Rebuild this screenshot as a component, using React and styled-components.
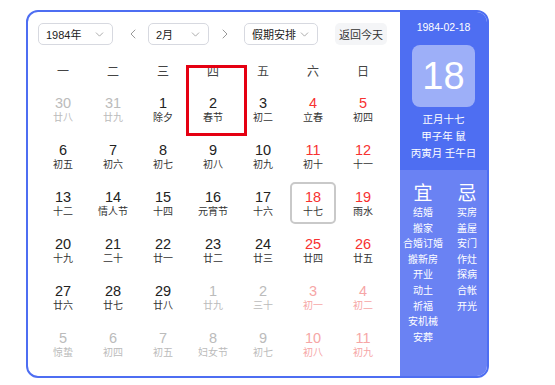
import React from 'react';
import styled, { createGlobalStyle } from 'styled-components';
import { ChevronDown, ChevronLeft, ChevronRight } from 'lucide-react';

const GlobalStyle = createGlobalStyle`
  body {
    margin: 0;
    background: #fff;
    font-family: "Liberation Sans", "Noto Sans CJK SC", sans-serif;
  }
  * { box-sizing: border-box; }
`

const Page = styled.div`
  padding: 10px 0 0 26px;
`

const Card = styled.div`
  position: relative;
  display: flex;
  width: 463px;
  height: 368px;
  border: 2px solid #4e6ef2;
  border-radius: 12px;
  overflow: hidden;
`

const Main = styled.div`
  width: 372px;
  padding: 11px 0 0 10px;
`

const Toolbar = styled.div`
  display: flex;
  align-items: center;
  height: 22px;
`

const Select = styled.div`
  display: flex;
  align-items: center;
  justify-content: space-between;
  width: ${p => p.$width}px;
  height: 22px;
  padding: 0 6px 0 7px;
  border: 1px solid #d7d9e0;
  border-radius: 5px;
  font-size: 11px;
  color: #222;
  white-space: nowrap;
`

const Arrow = styled.div`
  display: flex;
  align-items: center;
  justify-content: center;
  width: 20px;
  height: 22px;
  margin: 0 ${p => p.$right}px 0 ${p => p.$left}px;
  color: #999;
`

const TodayButton = styled.div`
  display: flex;
  align-items: center;
  justify-content: center;
  width: 52px;
  height: 22px;
  margin-left: 17px;
  border-radius: 5px;
  background: #f4f5f7;
  font-size: 11px;
  color: #333;
  white-space: nowrap;
`

const Grid = styled.div`
  display: grid;
  grid-template-columns: repeat(7, 46px);
  column-gap: 4px;
  row-gap: 5px;
  padding: 0 2px;
`

const WeekHead = styled(Grid)`
  margin-top: 17px;
  margin-bottom: 6px;
`

const WeekDay = styled.div`
  height: 20px;
  line-height: 20px;
  text-align: center;
  font-size: 12px;
  color: #444;
`

const Cell = styled.div`
  height: 42px;
  padding-top: ${p => p.$selected ? 4 : 6}px;
  text-align: center;
  border: ${p => p.$selected ? '2px solid #c9c9c9' : 'none'};
  border-radius: 5px;
`

const DayNum = styled.div`
  height: 18px;
  line-height: 18px;
  font-size: 14.5px;
  color: ${p => p.$tone};
`

const Lunar = styled.div`
  height: 12px;
  line-height: 12px;
  font-size: 10px;
  color: ${p => p.$tone};
`

const Side = styled.div`
  display: flex;
  flex-direction: column;
  width: 87px;
  color: #fff;
`

const SideTop = styled.div`
  display: flex;
  flex-direction: column;
  align-items: center;
  height: 158px;
  padding-top: 7px;
  background: #4e6ef2;
  font-size: 10.5px;
`

const DateLine = styled.div`
  line-height: 16px;
`

const BigDay = styled.div`
  display: flex;
  align-items: center;
  justify-content: center;
  width: 63px;
  height: 62px;
  margin: 10px 0 3px;
  border-radius: 8px;
  background: rgba(255, 255, 255, 0.45);
  font-size: 38px;
  font-weight: 300;
`

const InfoLine = styled.div`
  line-height: 17px;
  font-family: "Noto Sans CJK SC", sans-serif;
`

const SideBottom = styled.div`
  flex: 1;
  display: grid;
  grid-template-columns: 42px 42px;
  column-gap: 2px;
  padding: 10px 0 0 2px;
  background: #6a82f3;
`

const Column = styled.div`
  display: flex;
  flex-direction: column;
  align-items: center;
`

const Mark = styled.div`
  height: 24px;
  line-height: 24px;
  font-size: 19px;
  font-family: "Noto Sans CJK SC", sans-serif;
`

const Item = styled.div`
  height: 15.6px;
  line-height: 15.6px;
  font-size: 10px;
  white-space: nowrap;
  font-family: "Noto Sans CJK SC", sans-serif;
`

const Highlight = styled.div`
  position: absolute;
  left: 158px;
  top: 53px;
  width: 61px;
  height: 71px;
  border: 3.5px solid #e50012;
`

const weekDays = ['一', '二', '三', '四', '五', '六', '日'];

// [day, lunar, otherMonth]
const days = [
  [30, '廿八', 1], [31, '廿九', 1], [1, '除夕', 0], [2, '春节', 0], [3, '初二', 0], [4, '立春', 0], [5, '初四', 0],
  [6, '初五', 0], [7, '初六', 0], [8, '初七', 0], [9, '初八', 0], [10, '初九', 0], [11, '初十', 0], [12, '十一', 0],
  [13, '十二', 0], [14, '情人节', 0], [15, '十四', 0], [16, '元宵节', 0], [17, '十六', 0], [18, '十七', 0], [19, '雨水', 0],
  [20, '十九', 0], [21, '二十', 0], [22, '廿一', 0], [23, '廿二', 0], [24, '廿三', 0], [25, '廿四', 0], [26, '廿五', 0],
  [27, '廿六', 0], [28, '廿七', 0], [29, '廿八', 0], [1, '廿九', 1], [2, '三十', 1], [3, '初一', 1], [4, '初二', 1],
  [5, '惊蛰', 1], [6, '初四', 1], [7, '初五', 1], [8, '妇女节', 1], [9, '初七', 1], [10, '初八', 1], [11, '初九', 1],
];

const good = ['结婚', '搬家', '合婚订婚', '搬新房', '开业', '动土', '祈福', '安机械', '安葬'];
const bad = ['买房', '盖屋', '安门', '作灶', '探病', '合帐', '开光'];

const numTone = (i, other) => {
  const weekend = i % 7 >= 5;
  if (other) return weekend ? '#f6a6a6' : '#bbbbbb';
  return weekend ? '#f73131' : '#222';
};

const lunarTone = (i, other) => {
  if (other) return i % 7 >= 5 ? '#f6a6a6' : '#bbbbbb';
  return '#333';
};

const App = () => (
  <Page>
    <GlobalStyle />
    <Card>
      <Main>
        <Toolbar>
          <Select $width={75}>1984年<ChevronDown size={13} strokeWidth={1.5} color="#999" /></Select>
          <Arrow $left={10} $right={5}><ChevronLeft size={16} strokeWidth={1.5} /></Arrow>
          <Select $width={61}>2月<ChevronDown size={13} strokeWidth={1.5} color="#999" /></Select>
          <Arrow $left={6} $right={9}><ChevronRight size={16} strokeWidth={1.5} /></Arrow>
          <Select $width={74}>假期安排<ChevronDown size={13} strokeWidth={1.5} color="#999" /></Select>
          <TodayButton>返回今天</TodayButton>
        </Toolbar>
        <WeekHead>
          {weekDays.map(d => <WeekDay key={d}>{d}</WeekDay>)}
        </WeekHead>
        <Grid>
          {days.map(([num, lunar, other], i) => (
            <Cell key={i} $selected={i === 19}>
              <DayNum $tone={numTone(i, other)}>{num}</DayNum>
              <Lunar $tone={lunarTone(i, other)}>{lunar}</Lunar>
            </Cell>
          ))}
        </Grid>
      </Main>
      <Side>
        <SideTop>
          <DateLine>1984-02-18</DateLine>
          <BigDay>18</BigDay>
          <InfoLine>正月十七</InfoLine>
          <InfoLine>甲子年 鼠</InfoLine>
          <InfoLine>丙寅月 壬午日</InfoLine>
        </SideTop>
        <SideBottom>
          <Column>
            <Mark>宜</Mark>
            {good.map(g => <Item key={g}>{g}</Item>)}
          </Column>
          <Column>
            <Mark>忌</Mark>
            {bad.map(b => <Item key={b}>{b}</Item>)}
          </Column>
        </SideBottom>
      </Side>
      <Highlight />
    </Card>
  </Page>
);

export default App;
